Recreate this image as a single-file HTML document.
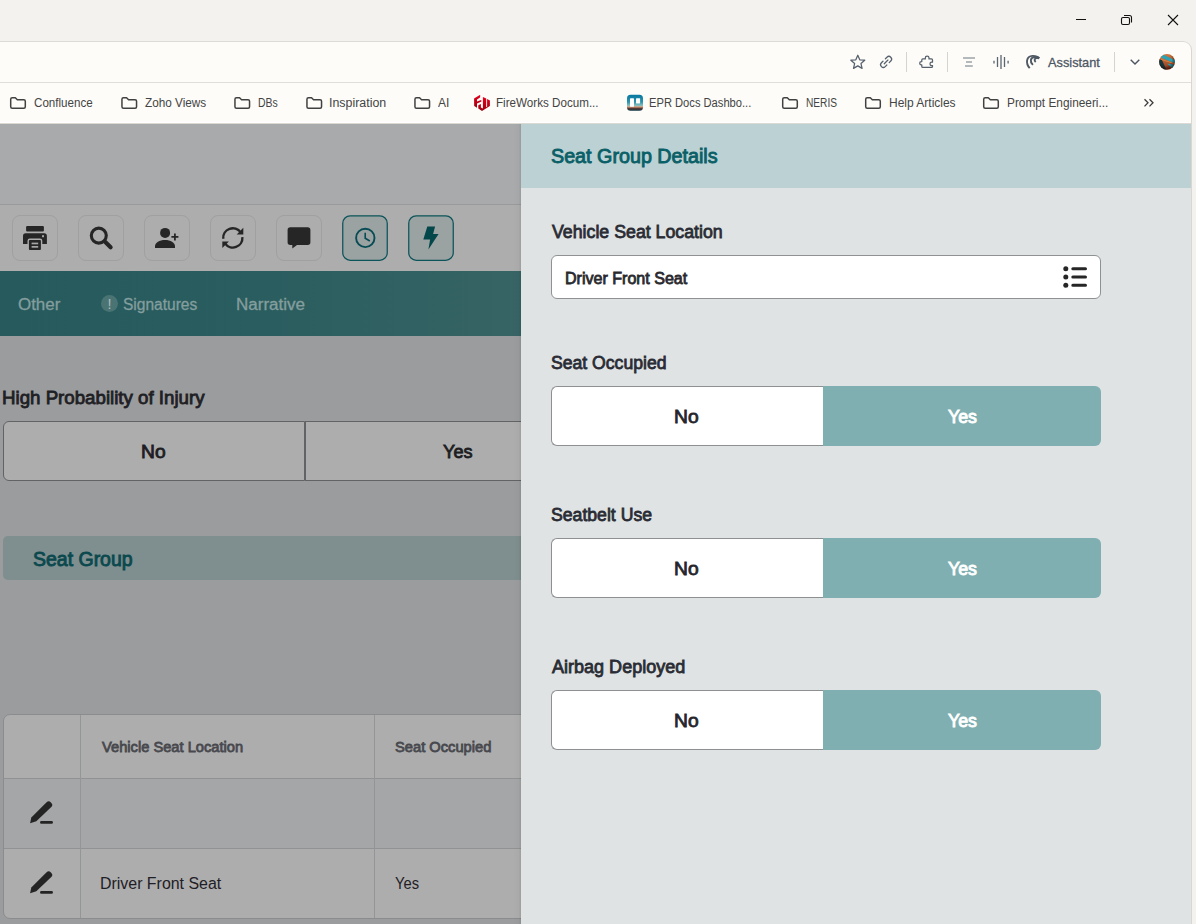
<!DOCTYPE html>
<html lang="en">
<head>
<meta charset="utf-8">
<title>Seat Group Details</title>
<style>
html,body{margin:0;padding:0}
body{width:1196px;height:924px;overflow:hidden;position:relative;background:#f3f2ee;font-family:"Liberation Sans",sans-serif}
.a{position:absolute}
.t{position:absolute;white-space:nowrap;line-height:1;transform-origin:0 0;font-family:"Liberation Sans",sans-serif}
svg{position:absolute;overflow:visible}
/* chrome */
#tb{left:0;top:41px;width:1192px;height:883px;background:#fdfcf9;border-top:1px solid #dcdbd5;border-right:1px solid #d9d7d0;border-top-right-radius:9px;box-sizing:border-box}
#tbline{left:0;top:82px;width:1191px;height:1px;background:#dfded8}
.vd{width:1px;height:20px;top:52px;background:#d6d4cd}
/* page */
#page{left:0;top:123px;width:521px;height:801px;background:#9b9c9d;overflow:hidden}
#p-top{left:0;top:0;width:521px;height:81px;background:#a9aaab}
#p-line{left:0;top:81px;width:521px;height:1px;background:#999a9b}
#p-tools{left:0;top:82px;width:521px;height:66px;background:#adadad}
.ib{width:44px;height:44px;top:92px;border:1px solid #a0a0a0;border-radius:8px;background:#adadad}
.ib.on{border:none;background:none;width:46px;height:46px}
#p-nav{left:0;top:148px;width:521px;height:65px;background:linear-gradient(90deg,#265a5c 0%,#2a5d5f 50%,#376465 100%)}
/* panel */
#panel{left:521px;top:123px;width:670px;height:801px;background:#dfe3e4}
#phead{left:0;top:0;width:670px;height:65px;background:#bcd1d4}
.inp{left:30px;top:132px;width:548px;height:42px;border:1px solid #8f9193;border-radius:6px;background:#fff}
.tg{left:30px;width:550px;height:60px}
.tg .no{left:0;top:0;width:272px;height:58px;border:1px solid #8d8f91;border-right:none;border-radius:6px 0 0 6px;background:#fff}
.tg .yes{left:272px;top:0;width:278px;height:60px;border-radius:0 6px 6px 0;background:#80afb1}
</style>
</head>
<body>
<!-- ===== browser chrome ===== -->
<div class="a" id="tb"></div>
<div class="a" id="tbline"></div>
<!--CHROME-START-->
<svg style="left:1060px;top:8px" width="130" height="26" viewBox="1060 8 130 26">
  <path d="M1076 19.500H1086" stroke="#111" stroke-width="1"/>
  <rect x="1121.500" y="17.500" width="8" height="7" rx="1.500" fill="none" stroke="#111" stroke-width="1.100"/>
  <path d="M1124 15.500H1129.500a2 2 0 0 1 2 2V22.500" fill="none" stroke="#111" stroke-width="1.100"/>
  <path d="M1168 15L1178 25M1178 15L1168 25" stroke="#111" stroke-width="1.100"/>
</svg>
<svg style="left:0;top:90px" width="1191" height="26" viewBox="0 90 1191 26"><g fill="none" stroke="#414141" stroke-width="1.500" stroke-linejoin="round"><path transform="translate(0.00 0)" d="M12.200 97.700H15.300L17.300 99.700H23.800a1.500 1.500 0 0 1 1.500 1.500V106.700a1.500 1.500 0 0 1-1.500 1.500H12.200a1.500 1.500 0 0 1-1.500-1.500V99.200a1.500 1.500 0 0 1 1.500-1.500z"/><path transform="translate(111.25 0)" d="M12.200 97.700H15.300L17.300 99.700H23.800a1.500 1.500 0 0 1 1.500 1.500V106.700a1.500 1.500 0 0 1-1.500 1.500H12.200a1.500 1.500 0 0 1-1.500-1.500V99.200a1.500 1.500 0 0 1 1.500-1.500z"/><path transform="translate(224.25 0)" d="M12.200 97.700H15.300L17.300 99.700H23.800a1.500 1.500 0 0 1 1.500 1.500V106.700a1.500 1.500 0 0 1-1.500 1.500H12.200a1.500 1.500 0 0 1-1.500-1.500V99.200a1.500 1.500 0 0 1 1.500-1.500z"/><path transform="translate(296.25 0)" d="M12.200 97.700H15.300L17.300 99.700H23.800a1.500 1.500 0 0 1 1.500 1.500V106.700a1.500 1.500 0 0 1-1.500 1.500H12.200a1.500 1.500 0 0 1-1.500-1.500V99.200a1.500 1.500 0 0 1 1.500-1.500z"/><path transform="translate(404.25 0)" d="M12.200 97.700H15.300L17.300 99.700H23.800a1.500 1.500 0 0 1 1.500 1.500V106.700a1.500 1.500 0 0 1-1.500 1.500H12.200a1.500 1.500 0 0 1-1.500-1.500V99.200a1.500 1.500 0 0 1 1.500-1.500z"/><path transform="translate(772.00 0)" d="M12.200 97.700H15.300L17.300 99.700H23.800a1.500 1.500 0 0 1 1.500 1.500V106.700a1.500 1.500 0 0 1-1.500 1.500H12.200a1.500 1.500 0 0 1-1.500-1.500V99.200a1.500 1.500 0 0 1 1.500-1.500z"/><path transform="translate(855.00 0)" d="M12.200 97.700H15.300L17.300 99.700H23.800a1.500 1.500 0 0 1 1.500 1.500V106.700a1.500 1.500 0 0 1-1.500 1.500H12.200a1.500 1.500 0 0 1-1.500-1.500V99.200a1.500 1.500 0 0 1 1.500-1.500z"/><path transform="translate(973.00 0)" d="M12.200 97.700H15.300L17.300 99.700H23.800a1.500 1.500 0 0 1 1.500 1.500V106.700a1.500 1.500 0 0 1-1.500 1.500H12.200a1.500 1.500 0 0 1-1.500-1.500V99.200a1.500 1.500 0 0 1 1.500-1.500z"/></g>
<path d="M1144.500 99.200L1148 102.800L1144.500 106.400M1149.500 99.200L1153 102.800L1149.500 106.400" fill="none" stroke="#3c3c3c" stroke-width="1.300"/>
<defs><linearGradient id="fw" x1="0" y1="0" x2="0" y2="1"><stop offset="0" stop-color="#e8001c"/><stop offset="1" stop-color="#9c0010"/></linearGradient><linearGradient id="ep" x1="0" y1="0" x2="0" y2="1"><stop offset="0" stop-color="#0878a0"/><stop offset="0.450" stop-color="#2b93ad"/><stop offset="0.680" stop-color="#8fc0bd"/><stop offset="0.760" stop-color="#e09a78"/><stop offset="0.840" stop-color="#5a3a34"/><stop offset="1" stop-color="#0d3a46"/></linearGradient></defs><g fill="url(#fw)"><path d="M474.050 98.400L479.800 95L480.300 95.600L480 97.600L477 99.500V101.600L481.200 99.900L481.500 101.500L477 103.600V107.700L474.200 106z"/><path d="M478.300 105.200L480.900 104V107.600L482.900 108.600V96.900L486.200 98.600V107.200L487.100 106.700V99L489.900 100.600V106L482 110.900L478.300 108.600z"/></g><rect x="627" y="94.800" width="16" height="16" rx="3.600" fill="url(#ep)"/><rect x="630" y="98.300" width="4" height="8.500" rx="0.400" fill="#fff"/><rect x="636" y="98.300" width="4.100" height="5.200" rx="0.400" fill="#fff"/></svg>
<svg style="left:840px;top:48px" width="350" height="28" viewBox="840 48 350 28">
  <g fill="none" stroke="#56616c" stroke-width="1.250" stroke-linejoin="round" stroke-linecap="round">
    <path d="M857.80,55.20L859.77,59.79L864.74,60.24L860.99,63.54L862.09,68.41L857.80,65.85L853.51,68.41L854.61,63.54L850.86,60.24L855.83,59.79z"/>
    <g transform="rotate(-45 886.100 61.900)">
      <path d="M884.400 59.200H882.175a2.700 2.700 0 0 0 0 5.400H884.400M887.800 59.200H890.025a2.700 2.700 0 0 1 0 5.400H887.800M883.500 61.900H888.700"/>
    </g>
    <path d="M922.800 58.900H925.300V58.100a1.850 1.850 0 0 1 3.700 0V58.900H931.500a1 1 0 0 1 1 1V62.200H931.700a1.700 1.700 0 0 0 0 3.400H932.500V66.400a1 1 0 0 1-1 1H922.800a1 1 0 0 1-1-1V64.900H921.400a1.700 1.700 0 0 1 0-3.400H921.800V59.900a1 1 0 0 1 1-1z"/>
  </g>
  <path d="M963 58H975M966 62H972M965 66H972.800" stroke="#9ca3a8" stroke-width="1.500"/>
  <path d="M994 60.700V63.500M997.500 57V67M1001 55.100V68.900M1004.500 57V67M1008.100 60.700V63.500" stroke="#5a6670" stroke-width="1.300"/>
  <g fill="none" stroke="#4f5963" stroke-width="1.900" stroke-linecap="butt">
    <path d="M1029.700 68.200C1025.500 63.500 1026 56.200 1032.500 55.900C1035.500 55.800 1038 56.700 1039.200 58.200"/>
    <path d="M1032.900 64.900C1029.500 61.500 1030.500 57.500 1034.300 57C1036.300 56.800 1038 57.300 1039.200 58.200"/>
    <path d="M1035.700 62C1033.800 60.200 1034.600 58.300 1036.600 58C1037.700 57.900 1038.600 58 1039.200 58.300"/>
  </g>
  <path d="M1130.700 59.700L1135 64L1139.300 59.700" fill="none" stroke="#4a5560" stroke-width="1.400"/>
  <defs><linearGradient id="avb" x1="0" y1="0" x2="0.300" y2="1"><stop offset="0.250" stop-color="#cc733e"/><stop offset="1" stop-color="#8a3720"/></linearGradient><clipPath id="av"><circle cx="1167" cy="61.900" r="7.900"/></clipPath>
  <radialGradient id="avs" cx="0.400" cy="0.350" r="0.700"><stop offset="0.550" stop-color="#000" stop-opacity="0"/><stop offset="1" stop-color="#3a0800" stop-opacity="0.750"/></radialGradient></defs>
  <g clip-path="url(#av)">
    <rect x="1159" y="54" width="16" height="16" fill="url(#avb)"/>
    <path d="M1160.500 57.500L1163.500 54.800L1175 60.200V63.200z" fill="#2ba3b5"/>
    <path d="M1158 59L1162 60L1166.500 70H1158z" fill="#18373c"/>
    <path d="M1167 63.500L1176 65V69L1172 68z" fill="#2ba6b8"/>
    <path d="M1161 59.300L1175 63.800" stroke="#d9823f" stroke-width="1"/>
    <circle cx="1167" cy="61.900" r="7.900" fill="url(#avs)"/>
  </g>
</svg>
<div class="a vd" style="left:906px"></div><div class="a vd" style="left:947px"></div><div class="a vd" style="left:1114px"></div>
<!--CHROME-END-->

<!-- ===== dimmed page ===== -->
<div class="a" id="page">
  <div class="a" id="p-top"></div>
  <div class="a" id="p-line"></div>
  <div class="a" id="p-tools"></div>
  <div class="a" id="p-nav"></div>
<!--PAGE-START-->
  <!-- toolbar buttons -->
  <div class="a ib" style="left:12px"></div>
  <div class="a ib" style="left:78px"></div>
  <div class="a ib" style="left:144px"></div>
  <div class="a ib" style="left:210px"></div>
  <div class="a ib" style="left:276px"></div>
  <svg style="left:342px;top:92px" width="46" height="46"><rect x="0.750" y="0.750" width="44.500" height="44.500" rx="7.500" fill="#9ba2a2" stroke="#0b545a" stroke-width="1.250"/></svg>
  <svg style="left:408px;top:92px" width="46" height="46"><rect x="0.750" y="0.750" width="44.500" height="44.500" rx="7.500" fill="#9ba2a2" stroke="#0b545a" stroke-width="1.250"/></svg>
  <!-- print -->
  <svg style="left:12px;top:92px" width="46" height="46" viewBox="12 215 46 46">
    <rect x="26.1" y="226" width="17.8" height="5.6" rx="1" fill="#262626"/>
    <path d="M23 244V236a2.7 2.7 0 0 1 2.7-2.7H44.2a2.7 2.7 0 0 1 2.7 2.7V244H23z" fill="#262626"/>
    <rect x="28.2" y="239.2" width="13.4" height="11.4" rx="1.6" fill="#262626" stroke="#adadad" stroke-width="1.4"/>
    <rect x="31.6" y="242.6" width="6.6" height="1.7" fill="#a6a6a6"/>
    <rect x="31.6" y="246" width="6.6" height="1.7" fill="#a6a6a6"/>
    <rect x="42" y="235.2" width="2" height="2" fill="#a6a6a6"/>
  </svg>
  <!-- search -->
  <svg style="left:78px;top:92px" width="46" height="46" viewBox="78 215 46 46">
    <circle cx="98.8" cy="235.600" r="7.500" fill="none" stroke="#262626" stroke-width="3.100"/>
    <path d="M104.800 241.600L110.600 247.200" stroke="#262626" stroke-width="4.200" stroke-linecap="round"/>
  </svg>
  <!-- person add -->
  <svg style="left:144px;top:92px" width="46" height="46" viewBox="144 215 46 46">
    <circle cx="165.1" cy="232.9" r="5" fill="#262626"/>
    <path d="M155 247.9v-1.6c0-3.6 4.5-6.3 10-6.3s10 2.700 10 6.300v1.600z" fill="#262626"/>
    <path d="M171.400 236.900h7M174.900 233.400v7" stroke="#262626" stroke-width="1.800"/>
  </svg>
  <!-- refresh -->
  <svg style="left:210px;top:92px" width="46" height="46" viewBox="210 215 46 46">
    <path d="M223.240 238.730A9.600 9.600 0 0 1 240.660 232.400" fill="none" stroke="#262626" stroke-width="2.400"/>
    <path d="M242.360 237.070A9.600 9.600 0 0 1 224.940 243.400" fill="none" stroke="#262626" stroke-width="2.400"/>
    <path d="M243.300 227.800V234.400H236.700z" fill="#262626"/>
    <path d="M222.300 248V241.400H228.900z" fill="#262626"/>
  </svg>
  <!-- chat -->
  <svg style="left:276px;top:92px" width="46" height="46" viewBox="276 215 46 46">
    <path d="M290.300 227.300H307.700a2.700 2.700 0 0 1 2.700 2.700V242.200a2.700 2.700 0 0 1-2.700 2.700H297l-4.700 3.500V244.900H290.300a2.700 2.700 0 0 1-2.700-2.700V230a2.700 2.700 0 0 1 2.700-2.700z" fill="#262626"/>
  </svg>
  <!-- clock -->
  <svg style="left:342px;top:92px" width="46" height="46" viewBox="342 215 46 46">
    <circle cx="365.300" cy="237.900" r="9.200" fill="none" stroke="#074c54" stroke-width="1.900"/>
    <path d="M365.200 232.700V238.200L369.800 241" fill="none" stroke="#074c54" stroke-width="1.600"/>
  </svg>
  <!-- bolt -->
  <svg style="left:408px;top:92px" width="46" height="46" viewBox="408 215 46 46">
    <path d="M427.300 226.600H435.100L433.100 233.900H438.600L428.400 249.600L430.100 239.600H423.300z" fill="#04474b"/>
  </svg>

  <!-- nav ! badge -->
  <svg style="left:101px;top:172px" width="17" height="17" viewBox="0 0 17 17">
    <circle cx="8.500" cy="8.500" r="8.500" fill="#4a7374"/>
    <text x="8.600" y="13.600" text-anchor="middle" font-family="Liberation Sans, sans-serif" font-size="14.500" font-weight="400" fill="#a9bcbc">!</text>
  </svg>

  <!-- high prob toggle -->
  <div class="a" style="left:3px;top:298px;width:300px;height:58px;border:1px solid #626365;border-radius:6px 0 0 6px;background:#adadad"></div>
  <div class="a" style="left:305px;top:298px;width:230px;height:58px;border:1px solid #626365;background:#adadad"></div>

  <!-- seat group header -->
  <div class="a" style="left:3px;top:413px;width:530px;height:44px;border-radius:5px 0 0 5px;background:#7f8e8e"></div>

  <!-- table -->
  <div class="a" style="left:3px;top:591px;width:540px;height:203px;border:1px solid #8b8c8d;border-radius:7px 0 0 7px;background:#adadad;overflow:hidden">
    <div class="a" style="left:0;top:64px;width:540px;height:69px;background:#a5a6a7"></div>
    <div class="a" style="left:0;top:63px;width:540px;height:1px;background:#919293"></div>
    <div class="a" style="left:0;top:133px;width:540px;height:1px;background:#919293"></div>
    <div class="a" style="left:76px;top:0;width:1px;height:203px;background:#949596"></div>
    <div class="a" style="left:370px;top:0;width:1px;height:203px;background:#949596"></div>
  </div>
  <!-- pencils -->
  <svg style="left:24px;top:674px" width="36" height="32" viewBox="24 797 36 32">
    <path d="M30.100 823.200L31.300 817.600L46.600 802.300a2.900 2.900 0 0 1 4.100 0l0.600 0.600a2.900 2.900 0 0 1 0 4.100L36.300 821.200z" fill="#242424"/>
    <path d="M41.400 822.450H51.600" stroke="#242424" stroke-width="2.700" stroke-linecap="round"/>
  </svg>
  <svg style="left:24px;top:744px" width="36" height="32" viewBox="24 797 36 32">
    <path d="M30.100 823.200L31.300 817.600L46.600 802.300a2.900 2.900 0 0 1 4.100 0l0.600 0.600a2.900 2.900 0 0 1 0 4.100L36.300 821.200z" fill="#242424"/>
    <path d="M41.400 822.450H51.600" stroke="#242424" stroke-width="2.700" stroke-linecap="round"/>
  </svg>
  <!-- panel shadow -->
  <div class="a" style="left:513px;top:0;width:8px;height:801px;background:linear-gradient(90deg,rgba(0,0,0,0),rgba(0,0,0,0.02) 70%,rgba(0,0,0,0.09))"></div>
<!--PAGE-END-->
</div>

<!-- ===== side panel ===== -->
<div class="a" id="panel">
  <div class="a" id="phead"></div>
  <div class="a inp"></div>
  <div class="a tg" style="top:263px"><div class="a no"></div><div class="a yes"></div></div>
  <div class="a tg" style="top:415px"><div class="a no"></div><div class="a yes"></div></div>
  <div class="a tg" style="top:567px"><div class="a no"></div><div class="a yes"></div></div>
<!--PANEL-START-->
  <svg style="left:540px;top:140px" width="30" height="28" viewBox="1061 263 30 28">
    <g fill="#262626"><circle cx="1065.800" cy="268.750" r="2.500"/><circle cx="1065.800" cy="277" r="2.500"/><circle cx="1065.800" cy="285.250" r="2.500"/></g>
    <path d="M1072.800 268.750H1085.500M1072.800 277H1085.500M1072.800 285.250H1085.500" stroke="#262626" stroke-width="3" stroke-linecap="round"/>
  </svg>
<!--PANEL-END-->
</div>

<div class="a" style="left:0;top:122px;width:1191px;height:1px;background:#ffffff"></div>
<div class="a" style="left:0;top:123px;width:1191px;height:1px;background:#dcd9d2"></div>
<!-- ===== texts ===== -->
<span class="t" style="left:34.25px;top:97.00px;font-size:12px;font-weight:400;color:#444444;transform:scaleX(0.9667);">Confluence</span>
<span class="t" style="left:145.00px;top:97.00px;font-size:12px;font-weight:400;color:#444444;transform:scaleX(0.9803);">Zoho Views</span>
<span class="t" style="left:257.70px;top:97.00px;font-size:12px;font-weight:400;color:#444444;transform:scaleX(0.8712);">DBs</span>
<span class="t" style="left:329.47px;top:97.00px;font-size:12px;font-weight:400;color:#444444;transform:scaleX(1.0337);">Inspiration</span>
<span class="t" style="left:438.00px;top:97.00px;font-size:12px;font-weight:400;color:#444444;transform:scaleX(1.0019);">AI</span>
<span class="t" style="left:496.25px;top:97.00px;font-size:12px;font-weight:400;color:#444444;transform:scaleX(0.9696);">FireWorks Docum...</span>
<span class="t" style="left:648.70px;top:97.00px;font-size:12px;font-weight:400;color:#444444;transform:scaleX(0.9297);">EPR Docs Dashbo...</span>
<span class="t" style="left:805.70px;top:97.00px;font-size:12px;font-weight:400;color:#444444;transform:scaleX(0.8456);">NERIS</span>
<span class="t" style="left:888.70px;top:97.00px;font-size:12px;font-weight:400;color:#444444;transform:scaleX(0.9986);">Help Articles</span>
<span class="t" style="left:1006.70px;top:97.00px;font-size:12px;font-weight:400;color:#444444;transform:scaleX(0.9865);">Prompt Engineeri...</span>
<span class="t" style="left:1047.70px;top:55.80px;font-size:13px;font-weight:400;color:#4d5764;transform:scaleX(0.9825);-webkit-text-stroke:0.3px #4d5764;">Assistant</span>
<span class="t" style="left:18.25px;top:297.00px;font-size:16px;font-weight:400;color:#849e9e;transform:scaleX(1.0570);-webkit-text-stroke:0.3px #849e9e;">Other</span>
<span class="t" style="left:122.75px;top:297.00px;font-size:16px;font-weight:400;color:#849e9e;transform:scaleX(0.9707);-webkit-text-stroke:0.3px #849e9e;">Signatures</span>
<span class="t" style="left:236.45px;top:297.00px;font-size:16px;font-weight:400;color:#849e9e;transform:scaleX(1.0624);-webkit-text-stroke:0.3px #849e9e;">Narrative</span>
<span class="t" style="left:1.96px;top:389.00px;font-size:18px;font-weight:400;color:#202024;transform:scaleX(1.0382);-webkit-text-stroke:0.8px #202024;">High Probability of Injury</span>
<span class="t" style="left:140.93px;top:443.00px;font-size:18px;font-weight:400;color:#1d1d21;transform:scaleX(1.0682);-webkit-text-stroke:0.8px #1d1d21;">No</span>
<span class="t" style="left:442.70px;top:443.00px;font-size:18px;font-weight:400;color:#1d1d21;transform:scaleX(1.0046);-webkit-text-stroke:0.8px #1d1d21;">Yes</span>
<span class="t" style="left:33.00px;top:548.50px;font-size:20px;font-weight:400;color:#0b494e;transform:scaleX(0.9739);-webkit-text-stroke:0.9px #0b494e;">Seat Group</span>
<span class="t" style="left:101.55px;top:739.00px;font-size:15px;font-weight:400;color:#48494e;transform:scaleX(0.9780);-webkit-text-stroke:0.8px #48494e;">Vehicle Seat Location</span>
<span class="t" style="left:395.00px;top:739.00px;font-size:15px;font-weight:400;color:#48494e;transform:scaleX(0.9791);-webkit-text-stroke:0.8px #48494e;">Seat Occupied</span>
<span class="t" style="left:99.76px;top:876.25px;font-size:16px;font-weight:400;color:#1f2026;transform:scaleX(0.9949);">Driver Front Seat</span>
<span class="t" style="left:395.00px;top:876.25px;font-size:16px;font-weight:400;color:#1f2026;transform:scaleX(0.9199);">Yes</span>
<span class="t" style="left:551.40px;top:146.20px;font-size:20px;font-weight:400;color:#0a6067;transform:scaleX(0.9859);-webkit-text-stroke:0.9px #0a6067;">Seat Group Details</span>
<span class="t" style="left:551.80px;top:223.00px;font-size:18px;font-weight:400;color:#2a2c34;transform:scaleX(0.9861);-webkit-text-stroke:0.8px #2a2c34;">Vehicle Seat Location</span>
<span class="t" style="left:564.69px;top:271.00px;font-size:16px;font-weight:400;color:#2a2a2e;transform:scaleX(1.0036);-webkit-text-stroke:0.8px #2a2a2e;">Driver Front Seat</span>
<span class="t" style="left:551.00px;top:353.75px;font-size:18px;font-weight:400;color:#2a2c34;transform:scaleX(0.9782);-webkit-text-stroke:0.8px #2a2c34;">Seat Occupied</span>
<span class="t" style="left:674.43px;top:408.00px;font-size:18px;font-weight:400;color:#24252b;transform:scaleX(1.0682);-webkit-text-stroke:0.8px #24252b;">No</span>
<span class="t" style="left:948.00px;top:408.00px;font-size:18px;font-weight:400;color:#ffffff;transform:scaleX(0.9876);-webkit-text-stroke:0.9px #ffffff;">Yes</span>
<span class="t" style="left:551.00px;top:505.75px;font-size:18px;font-weight:400;color:#2a2c34;transform:scaleX(0.9801);-webkit-text-stroke:0.8px #2a2c34;">Seatbelt Use</span>
<span class="t" style="left:674.43px;top:560.00px;font-size:18px;font-weight:400;color:#24252b;transform:scaleX(1.0682);-webkit-text-stroke:0.8px #24252b;">No</span>
<span class="t" style="left:948.00px;top:560.00px;font-size:18px;font-weight:400;color:#ffffff;transform:scaleX(0.9876);-webkit-text-stroke:0.9px #ffffff;">Yes</span>
<span class="t" style="left:551.80px;top:657.75px;font-size:18px;font-weight:400;color:#2a2c34;transform:scaleX(1.0015);-webkit-text-stroke:0.8px #2a2c34;">Airbag Deployed</span>
<span class="t" style="left:674.43px;top:712.00px;font-size:18px;font-weight:400;color:#24252b;transform:scaleX(1.0682);-webkit-text-stroke:0.8px #24252b;">No</span>
<span class="t" style="left:948.00px;top:712.00px;font-size:18px;font-weight:400;color:#ffffff;transform:scaleX(0.9876);-webkit-text-stroke:0.9px #ffffff;">Yes</span>
</body>
</html>
